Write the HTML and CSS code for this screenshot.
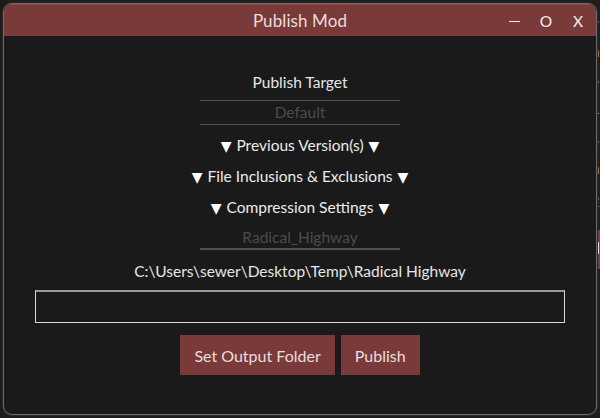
FILE: index.html
```html
<!DOCTYPE html>
<html>
<head>
<meta charset="utf-8">
<link rel="stylesheet" href="styles.css">
</head>
<body>
<div class="desk">
  <div class="behind">
    <span style="top:12px">e</span>
    <span style="top:42px">n</span>
    <span style="top:72px">e</span>
    <span style="top:99px">1</span>
    <span style="top:132px">e</span>
    <span style="top:159px">n</span>
    <span style="top:189px">e</span>
    <div class="behind-line"></div>
    <div class="behind-red"><i></i></div>
  </div>
  <div class="window">
    <div class="titlebar">
      <div class="title">Publish Mod</div>
      <div class="controls">
        <span class="ctl"><i class="dash"></i></span>
        <span class="ctl">O</span>
        <span class="ctl">X</span>
      </div>
    </div>
    <div class="content">
      <div class="label">Publish Target</div>
      <div class="field boxed">Default</div>
      <div class="expander e1"><span class="tri">&#9660;</span> Previous Version(s) <span class="tri">&#9660;</span></div>
      <div class="expander"><span class="tri">&#9660;</span> File Inclusions &amp; Exclusions <span class="tri">&#9660;</span></div>
      <div class="expander"><span class="tri">&#9660;</span> Compression Settings <span class="tri">&#9660;</span></div>
      <div class="field under">Radical_Highway</div>
      <div class="path">C:\Users\sewer\Desktop\Temp\Radical Highway</div>
      <div class="textbox"></div>
      <div class="buttons">
        <button class="btn">Set Output Folder</button>
        <button class="btn">Publish</button>
      </div>
    </div>
  </div>
</div>
</body>
</html>
```
FILE: styles.css
```css
* { box-sizing: border-box; }
html, body { margin: 0; padding: 0; }
body {
  width: 600px;
  height: 418px;
  background: #1c1c1c;
  font-family: Lato, "Open Sans", sans-serif;
  overflow: hidden;
}
.desk {
  position: relative;
  width: 600px;
  height: 418px;
  padding: 3px 0 0 3px;
}
.behind {
  position: absolute;
  left: 596px;
  top: 0;
  width: 10px;
  height: 418px;
  background: #1e1e1e;
  color: #cfcfcf;
  font-size: 15px;
  overflow: hidden;
}
.behind span { position: absolute; left: -5px; }
.behind-line {
  position: absolute;
  top: 206px; left: 0; width: 10px; height: 1px; background: #555;
}
.behind-red {
  position: absolute;
  top: 230px; left: 0; width: 10px; height: 39px; background: #7b3d3d;
}
.behind-red i {
  position: absolute; left: 2px; top: 12px; width: 1px; height: 12px; background: #e0e0e0;
}
.window {
  position: relative;
  width: 594px;
  height: 412px;
  border: 1px solid #6a6a6a;
  box-shadow: 0 0 0 1px #2a2a2a;
  border-radius: 9px;
  background: #1a1a1a;
  overflow: hidden;
  display: flex;
  flex-direction: column;
}
.titlebar {
  height: 32px;
  background: #7b3a3a;
  border-top: 1px solid #8a4a4a;
  position: relative;
  display: flex;
  align-items: center;
  justify-content: center;
  color: #eadcdc;
}
.title {
  font-size: 17px;
  letter-spacing: 0.1px;
}
.controls {
  position: absolute;
  right: 2px;
  top: 0;
  height: 31px;
  display: flex;
  align-items: center;
}
.ctl {
  width: 32px;
  text-align: center;
  font-size: 15.5px;
  color: #eee;
  display: flex;
  justify-content: center;
  align-items: center;
  height: 31px;
}
.dash {
  display: block;
  width: 11px;
  height: 1.5px;
  background: #eee;
  margin-top: 2px;
}
.content {
  display: flex;
  flex-direction: column;
  align-items: center;
  padding-top: 36px;
  color: #e6e6e6;
  font-size: 15.5px;
}
.label { line-height: 20px; height: 20px; }
.field {
  width: 200px;
  text-align: center;
  color: #4c4c4c;
  font-size: 15.5px;
  line-height: 22px;
}
.boxed {
  margin-top: 8px;
  border-top: 1px solid #555;
  border-bottom: 1px solid #555;
  height: 25px;
}
.expander {
  height: 20px;
  line-height: 20px;
  margin-top: 11px;
  color: #ececec;
  white-space: nowrap;
}
.tri {
  font-family: "DejaVu Sans", sans-serif;
  font-size: 14px;
  line-height: 1;
  color: #fff;
  margin: 0 1px;
}
.e1 { margin-top: 10px; }
.under {
  margin-top: 9px;
  border-bottom: 2px solid #505050;
  height: 24px;
}
.path {
  margin-top: 11px;
  line-height: 20px;
}
.textbox {
  margin-top: 9px;
  width: 530px;
  height: 33px;
  border: 1px solid #d8d8d8;
  border-top: 2px solid #9a9a9a;
}
.buttons {
  margin-top: 12px;
  display: flex;
  gap: 6px;
}
.btn {
  height: 40px;
  background: #7b3a3a;
  color: #eadede;
  border: none;
  font-family: inherit;
  font-size: 16px;
  padding: 0 14px;
}
```
